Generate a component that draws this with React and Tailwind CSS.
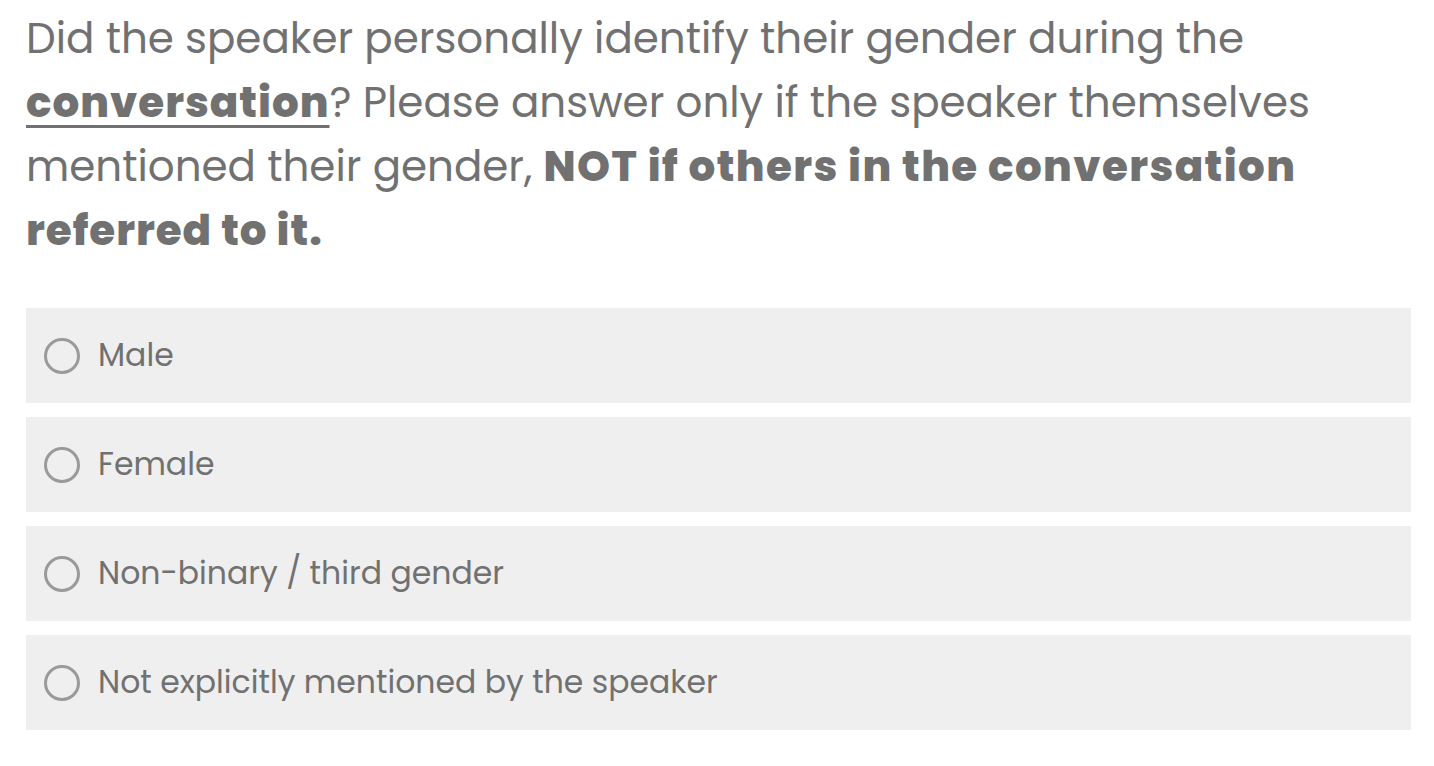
import React from "react";

const font = { fontFamily: '"Poppins", "Open Sans", "Liberation Sans", sans-serif' };

function Option({ label }) {
  return (
    <label className="flex h-[95px] items-center bg-[#efefef] pl-[18px]">
      <span className="box-border h-[36px] w-[36px] shrink-0 rounded-full border-[3px] border-[#9a9a9a]" />
      <span className="ml-[18px] text-[31.5px] text-[#717171]">{label}</span>
    </label>
  );
}

export default function App() {
  return (
    <div className="min-h-[766px] bg-white px-[26px] pt-[7px]" style={font}>
      <p className="text-[42px] leading-[64px] text-[#717171]">
        Did the speaker personally identify their gender during the
        <br />
        <span className="font-extrabold tracking-[1px] underline decoration-[3px] underline-offset-[8px]">conversation</span>? Please answer only if the speaker themselves
        <br />
        mentioned their gender, <span className="font-extrabold tracking-[1.4px]">NOT if others in the conversation</span>
        <br />
        <span className="font-extrabold tracking-[1px]">referred to it.</span>
      </p>
      <div className="mt-[45px] flex w-[1385px] flex-col gap-[14px]">
        <Option label="Male" />
        <Option label="Female" />
        <Option label="Non-binary / third gender" />
        <Option label="Not explicitly mentioned by the speaker" />
      </div>
    </div>
  );
}
